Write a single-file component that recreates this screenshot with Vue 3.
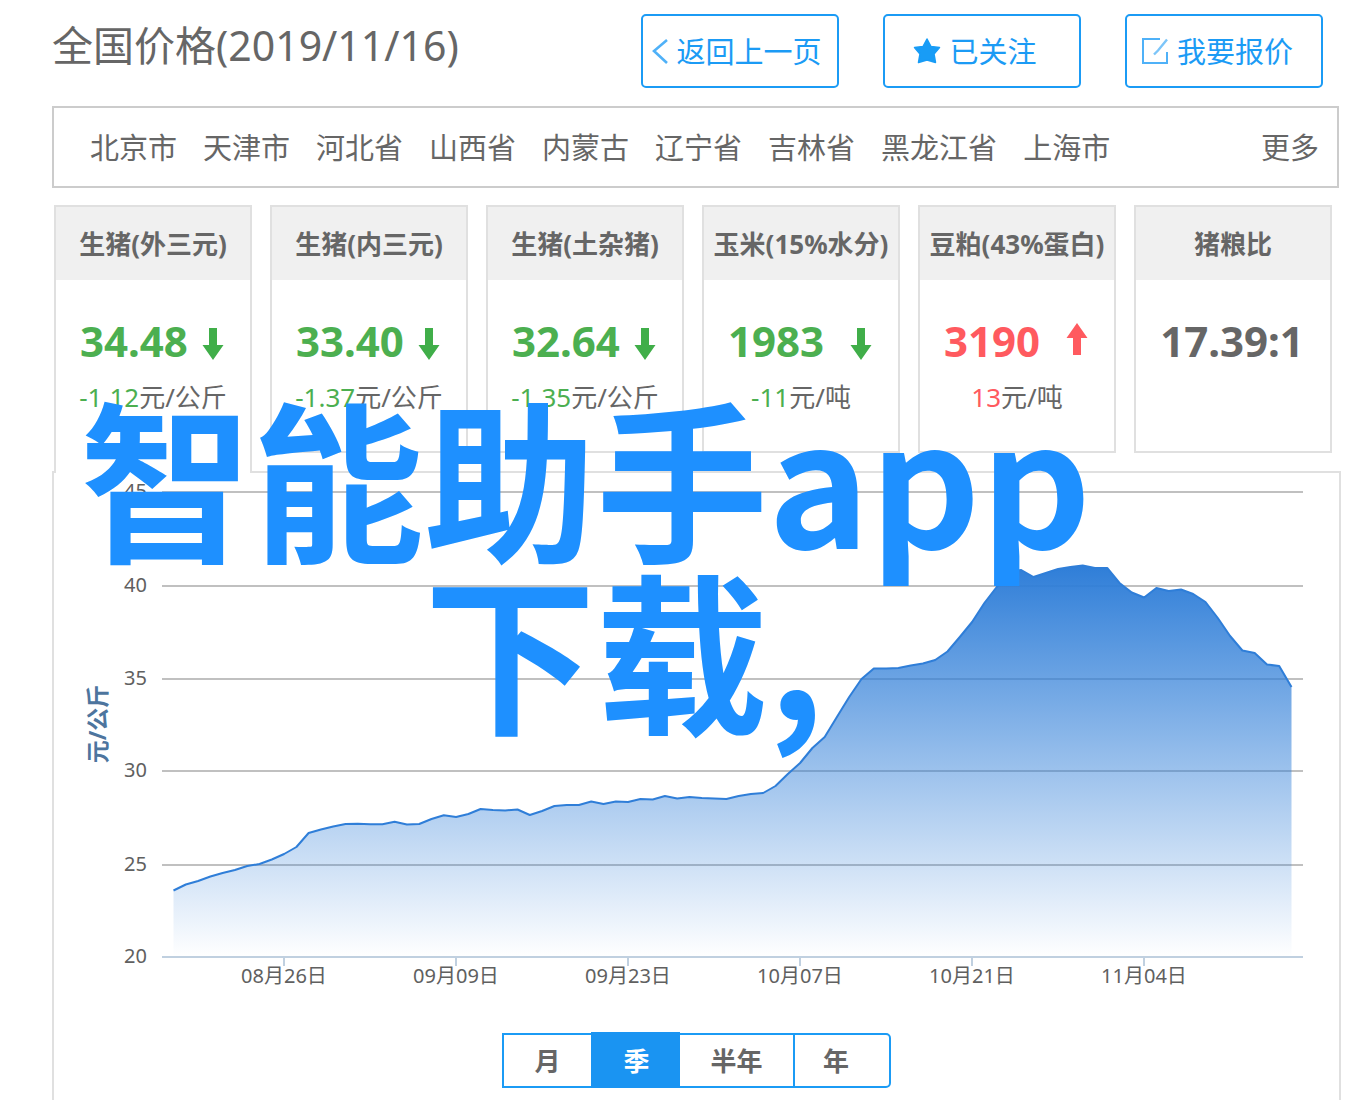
<script setup>
import { ref } from 'vue'

const regions = ['北京市', '天津市', '河北省', '山西省', '内蒙古', '辽宁省', '吉林省', '黑龙江省', '上海市']

const cards = [
  { name: '生猪(外三元)', price: '34.48', trend: 'down', change: '-1.12', unit: '元/公斤' },
  { name: '生猪(内三元)', price: '33.40', trend: 'down', change: '-1.37', unit: '元/公斤' },
  { name: '生猪(土杂猪)', price: '32.64', trend: 'down', change: '-1.35', unit: '元/公斤' },
  { name: '玉米(15%水分)', price: '1983', trend: 'down', change: '-11', unit: '元/吨' },
  { name: '豆粕(43%蛋白)', price: '3190', trend: 'up', change: '13', unit: '元/吨' },
  { name: '猪粮比', price: '17.39:1', trend: '', change: '', unit: '' },
]
const activeCard = ref(0)

const periods = ['月', '季', '半年', '年']
const activePeriod = ref('季')

// Daily level above the 20 元 baseline, in chart units
const levels = [
  66.5, 72.5, 76, 80.5, 84, 87, 91, 93, 97.5, 103, 110, 124, 127.5, 130.5, 133, 133.3,
  132.7, 132.7, 135.3, 132.5, 133, 138, 141.7, 140, 143, 148, 147, 146.5, 147.5, 142, 146, 151,
  152, 152, 155.5, 153, 155.5, 155, 158, 157.5, 161, 158.5, 160, 159, 158.5, 158, 161, 163,
  164, 171, 183, 194, 209, 220, 240, 260, 278, 288.5, 288.5, 289, 291.5, 293.5, 297, 305.5,
  320, 335, 354, 370, 385, 387, 380, 384, 388, 390, 391.5, 389, 389, 374, 364.5, 359.5,
  369, 366, 367.5, 363, 355, 339, 321, 306.5, 304, 292.5, 291, 270,
]
const baseline = 484
const firstX = 119.5
const stepX = 12.286
const points = levels.map((v, i) => `${(firstX + i * stepX).toFixed(1)},${(baseline - v).toFixed(1)}`)
const linePath = 'M' + points.join('L')
const areaPath = `${linePath}V${baseline}H${firstX}Z`

const yAxis = [
  { label: 45, y: 19 },
  { label: 40, y: 113 },
  { label: 35, y: 206 },
  { label: 30, y: 298 },
  { label: 25, y: 392 },
  { label: 20, y: 484 },
]
const xAxis = ['08月26日', '09月09日', '09月23日', '10月07日', '10月21日', '11月04日'].map((label, i) => ({
  label,
  x: 230 + i * 172,
}))
</script>

<template>
  <main class="page">
    <header class="top">
      <h1 class="title">全国价格(2019/11/16)</h1>
      <div class="actions">
        <button class="action" type="button">
          <svg class="icon-back" viewBox="0 0 24 28" aria-hidden="true">
            <path d="M23 3 L10 14 L23 26" fill="none" stroke="#4fb1f8" stroke-width="2.6" />
          </svg>
          <span>返回上一页</span>
        </button>
        <button class="action" type="button">
          <svg class="icon" viewBox="0 0 28 28" aria-hidden="true">
            <path
              d="M14 2 L18 9.5 L26.5 10.5 L21 17 L22.5 25.5 L14 23 L5.5 25.5 L7 17 L1.5 10.5 L10 9.5 Z"
              fill="#189cf6" stroke="#189cf6" stroke-width="1.5" stroke-linejoin="round"
            />
          </svg>
          <span>已关注</span>
        </button>
        <button class="action" type="button">
          <svg class="icon" viewBox="0 0 28 28" aria-hidden="true">
            <path d="M19 2 H2 V26 H26 V15" fill="none" stroke="#4fb1f8" stroke-width="2" />
            <path d="M26 2.5 L17 13.5 L13 17.5" fill="none" stroke="#7cc5f9" stroke-width="2.4" />
          </svg>
          <span>我要报价</span>
        </button>
      </div>
    </header>

    <nav class="regions">
      <a v-for="r in regions" :key="r" href="#">{{ r }}</a>
      <a class="more" href="#">更多</a>
    </nav>

    <section class="cards">
      <article
        v-for="(c, i) in cards"
        :key="c.name"
        class="card"
        :class="[c.trend, { active: i === activeCard }]"
        @click="activeCard = i"
      >
        <h2>{{ c.name }}</h2>
        <p class="price">
          <span class="value">{{ c.price }}</span>
          <svg v-if="c.trend" class="arrow" viewBox="0 0 22 32" aria-hidden="true">
            <path v-if="c.trend === 'down'" d="M7 0 H15 V17 H21.5 L11 32 L0.5 17 H7 Z" fill="#40ae49" />
            <path v-else d="M7 32 H15 V15 H21.5 L11 0 L0.5 15 H7 Z" fill="#ff5a5f" />
          </svg>
        </p>
        <p v-if="c.change" class="change"><span>{{ c.change }}</span>{{ c.unit }}</p>
      </article>
    </section>

    <section class="panel">
      <svg class="chart" viewBox="0 0 1285 559" role="img" aria-label="价格走势">
        <defs>
          <linearGradient id="fill" x1="0" y1="0" x2="0" y2="1">
            <stop offset="0" stop-color="#2f7ed8" />
            <stop offset="1" stop-color="#2f7ed8" stop-opacity="0" />
          </linearGradient>
        </defs>
        <g v-for="t in yAxis" :key="t.label">
          <line x1="108" x2="1249" :y1="t.y" :y2="t.y" :class="t.label === 20 ? 'axis' : 'grid'" />
          <text x="93" :y="t.y + 6" text-anchor="end">{{ t.label }}</text>
        </g>
        <g v-for="t in xAxis" :key="t.label">
          <line :x1="t.x" :x2="t.x" y1="484" y2="493" class="axis" />
          <text :x="t.x" y="510" text-anchor="middle">{{ t.label }}</text>
        </g>
        <text class="unit" transform="translate(52 251) rotate(-90)" text-anchor="middle">元/公斤</text>
        <path :d="areaPath" fill="url(#fill)" />
        <path :d="linePath" fill="none" stroke="#2f7ed8" stroke-width="2" stroke-linejoin="round" />
      </svg>

      <div class="periods">
        <button
          v-for="p in periods"
          :key="p"
          type="button"
          :class="{ on: p === activePeriod, wide: p.length > 1 }"
          @click="activePeriod = p"
        >{{ p }}</button>
      </div>
    </section>

    <div class="caption">
      <div>智能助手app</div>
      <div class="second">下载,</div>
    </div>
  </main>
</template>

<style>
body {
  margin: 0;
  background: #fff;
}
</style>

<style scoped>
.page {
  position: relative;
  box-sizing: border-box;
  display: flex;
  flex-direction: column;
  min-height: 100vh;
  padding: 14px 19px 0 52px;
  overflow: hidden;
  color: #666;
  font-family: "Noto Sans", "Noto Sans CJK SC", sans-serif;
}
h1, h2, p {
  margin: 0;
}
button {
  font-family: inherit;
  cursor: pointer;
}
.top {
  display: flex;
  justify-content: space-between;
  padding-right: 18px;
}
.title {
  font-size: 41px;
  font-weight: 400;
  line-height: 62px;
}
.actions {
  display: flex;
  gap: 44px;
}
.action {
  box-sizing: border-box;
  display: flex;
  align-items: center;
  justify-content: center;
  gap: 8px;
  width: 198px;
  height: 74px;
  padding: 0 14px 0 0;
  border: 2px solid #1b9bf5;
  border-radius: 5px;
  background: #fff;
  color: #1b9bf5;
  font-size: 29px;
  line-height: 40px;
  white-space: nowrap;
}
.action span {
  padding-top: 2px;
}
.icon {
  width: 28px;
  height: 28px;
}
.icon-back {
  flex: none;
  width: 24px;
  height: 28px;
}
.regions {
  box-sizing: border-box;
  display: flex;
  align-items: center;
  gap: 26px;
  height: 82px;
  margin: 18px 2px 17px 0;
  padding: 2px 18px 0 36px;
  border: 2px solid #ccc;
  font-size: 29px;
  line-height: 40px;
  white-space: nowrap;
}
.regions a {
  color: inherit;
  text-decoration: none;
}
.regions .more {
  margin-left: auto;
}
.cards {
  display: flex;
  align-items: flex-start;
  gap: 18px;
  height: 266px;
  padding: 0 9px 0 2px;
}
.card {
  box-sizing: border-box;
  flex: 1;
  min-width: 0;
  height: 248px;
  border: 2px solid #e0e0e0;
  background: #fff;
  text-align: center;
  white-space: nowrap;
}
.card.active {
  position: relative;
  height: 268px;
  border-bottom: 0;
}
.card h2 {
  height: 73px;
  background: #f0f0f0;
  font-size: 26px;
  font-weight: 700;
  line-height: 75px;
}
.price {
  display: flex;
  align-items: center;
  justify-content: center;
  gap: 14px;
  height: 60px;
  margin-top: 31px;
  padding-right: 2px;
  font-size: 42px;
  font-weight: 700;
  line-height: 60px;
}
.value {
  min-width: 108px;
  text-align: left;
}
.arrow {
  width: 22px;
  height: 32px;
  margin-top: 6px;
}
.up .arrow {
  margin: 0 0 4px;
}
.change {
  margin-top: 6px;
  font-size: 26px;
  line-height: 40px;
}
.down .value, .down .change span {
  color: #4caf50;
}
.up .value, .up .change span {
  color: #ff5a5f;
}
.panel {
  flex: 1;
  border: 2px solid #e0e0e0;
  border-bottom: 0;
}
.chart {
  display: block;
  width: 100%;
  height: auto;
}
.chart text {
  fill: #606060;
  font-size: 20px;
}
.chart .unit {
  fill: #4d759e;
  font-size: 23px;
  font-weight: 700;
}
.grid {
  stroke: #c0c0c0;
  stroke-width: 2;
}
.axis {
  stroke: #c0d0e0;
  stroke-width: 2;
}
.periods {
  display: flex;
  align-items: flex-end;
  width: fit-content;
  margin: 0 auto;
}
.periods button {
  box-sizing: border-box;
  width: 89px;
  height: 55px;
  padding: 0;
  border: 2px solid #1b9bf5;
  border-right: 0;
  background: #fff;
  color: #666;
  font-size: 26px;
  font-weight: 700;
  line-height: 50px;
}
.periods .wide {
  width: 113px;
  border-left: 0;
}
.periods .on {
  height: 56px;
  padding-top: 2px;
  border-color: #1a94f2;
  background: #1a94f2;
  color: #fff;
}
.periods button:last-child {
  width: 98px;
  padding-right: 12px;
  border-right: 2px solid #1b9bf5;
  border-radius: 0 5px 5px 0;
}
.caption {
  position: absolute;
  top: 388px;
  left: 80px;
  color: #1e90ff;
  font-family: "Noto Sans CJK SC", sans-serif;
  font-size: 172px;
  font-weight: 700;
  line-height: 172px;
  white-space: nowrap;
  pointer-events: none;
}
.caption .second {
  padding-left: 2em;
}
</style>
